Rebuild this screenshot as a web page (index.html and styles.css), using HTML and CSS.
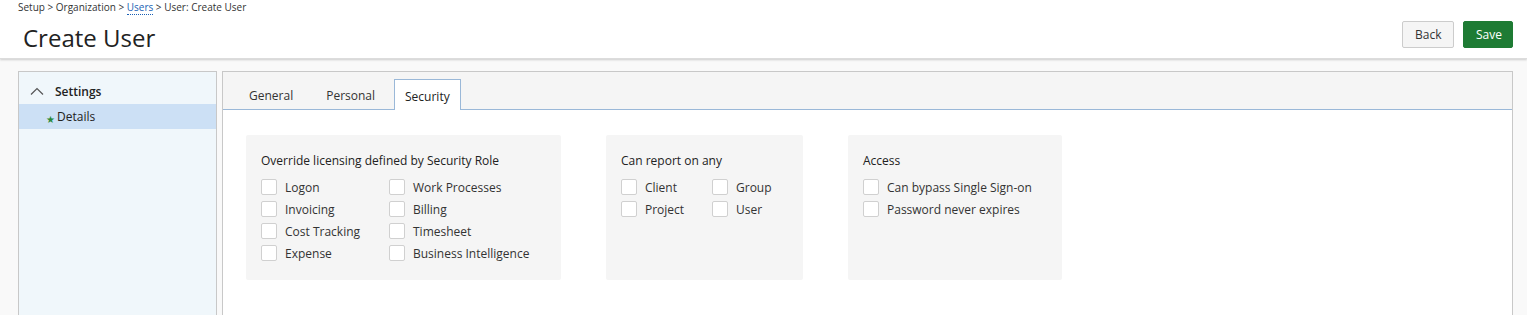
FILE: index.html
```html
<!DOCTYPE html>
<html lang="en">
<head>
<meta charset="UTF-8" />
<title>Create User</title>
<link rel="stylesheet" href="styles.css">
</head>
<body>
  <div class="page-header">
    <div class="header-left">
      <div class="breadcrumb">Setup &gt; Organization &gt; <a class="crumb-link">Users</a> &gt; User: Create User</div>
      <h1 class="page-title">Create User</h1>
    </div>
    <div class="header-actions">
      <button class="btn btn-back">Back</button>
      <button class="btn btn-save">Save</button>
    </div>
  </div>

  <div class="layout">
    <div class="sidebar">
      <div class="side-head">
        <svg class="chevron" width="14" height="8" viewBox="0 0 14 8"><path d="M1 7.5 L7 1.5 L13 7.5" fill="none" stroke="#555" stroke-width="1.2"/></svg>
        <span>Settings</span>
      </div>
      <div class="side-item active"><span class="star">&#9733;</span>Details</div>
    </div>

    <div class="main-panel">
      <div class="tabs">
        <div class="tab">General</div>
        <div class="tab">Personal</div>
        <div class="tab tab-active">Security</div>
      </div>
      <div class="tab-body">
        <div class="group group-lic">
          <div class="group-title">Override licensing defined by Security Role</div>
          <div class="check-grid cols-lic">
            <label class="check"><span class="box"></span>Logon</label>
            <label class="check"><span class="box"></span>Work Processes</label>
            <label class="check"><span class="box"></span>Invoicing</label>
            <label class="check"><span class="box"></span>Billing</label>
            <label class="check"><span class="box"></span>Cost Tracking</label>
            <label class="check"><span class="box"></span>Timesheet</label>
            <label class="check"><span class="box"></span>Expense</label>
            <label class="check"><span class="box"></span>Business Intelligence</label>
          </div>
        </div>
        <div class="group group-report">
          <div class="group-title">Can report on any</div>
          <div class="check-grid cols-report">
            <label class="check"><span class="box"></span>Client</label>
            <label class="check"><span class="box"></span>Group</label>
            <label class="check"><span class="box"></span>Project</label>
            <label class="check"><span class="box"></span>User</label>
          </div>
        </div>
        <div class="group group-access">
          <div class="group-title">Access</div>
          <div class="check-grid">
            <label class="check"><span class="box"></span>Can bypass Single Sign-on</label>
            <label class="check"><span class="box"></span>Password never expires</label>
          </div>
        </div>
      </div>
    </div>
  </div>
</body>
</html>
```

FILE: styles.css
```css
* { box-sizing: border-box; }
body {
  margin: 0;
  background: #f9f9f9;
  font-family: "Open Sans", Arial, sans-serif;
  color: #222;
  height: 315px;
  overflow: hidden;
}
.page-header {
  background: #fff;
  height: 59px;
  display: flex;
  justify-content: space-between;
  align-items: flex-start;
  box-shadow: 0 1px 2px rgba(0,0,0,0.18);
  border-bottom: 1px solid #dcdcdc;
}
.header-left { padding-left: 18px; }
.breadcrumb {
  font-size: 10px;
  line-height: 14px;
  color: #333;
}
.crumb-link {
  color: #1a5fb4;
  border-bottom: 1px dotted #1a5fb4;
}
.page-title {
  margin: 9px 0 0 5px;
  font-size: 24px;
  font-weight: 400;
  line-height: 30px;
  color: #222;
}
.header-actions {
  display: flex;
  gap: 9px;
  padding: 21px 14px 0 0;
}
.btn {
  height: 27px;
  font-family: "Open Sans", Arial, sans-serif;
  font-size: 12px;
  border-radius: 2px;
  padding: 0 12px;
  cursor: pointer;
}
.btn-back {
  width: 52px;
  background: #f5f5f5;
  border: 1px solid #ccc;
  color: #333;
}
.btn-save {
  width: 50px;
  background: #1e7b34;
  border: 1px solid #1e7b34;
  color: #fff;
}
.layout {
  display: flex;
  gap: 5px;
  height: 256px;
  padding: 12px 14px 0 18px;
}
.sidebar {
  width: 199px;
  background: #f0f7fb;
  border: 1px solid #c8c8c8;
  border-bottom: none;
  padding-top: 8px;
}
.side-head {
  display: flex;
  align-items: center;
  height: 22px;
  margin-bottom: 2px;
  font-size: 12px;
  font-weight: 600;
  color: #222;
  padding-left: 11px;
}
.chevron { margin-right: 11px; }
.side-item {
  height: 25px;
  line-height: 25px;
  font-size: 12px;
  padding-left: 27px;
  color: #222;
}
.side-item.active { background: #cce0f5; }
.star {
  color: #2a8a3a;
  font-size: 10px;
  margin-right: 2px;
  vertical-align: -2px;
}
.main-panel {
  flex: 1;
  border: 1px solid #c8c8c8;
  border-bottom: none;
  background: #fff;
}
.tabs {
  display: flex;
  align-items: flex-end;
  height: 38px;
  background: #f5f5f5;
  border-bottom: 1px solid #9ab8d8;
  padding-left: 12px;
}
.tab {
  height: 31px;
  padding: 3px 13px 0;
  line-height: 28px;
  font-size: 12px;
  color: #333;
  margin-right: 5px;
  border: 1px solid transparent;
  border-bottom: none;
}
.tab-active {
  background: #fff;
  border-color: #9ab8d8;
  margin-bottom: -1px;
  height: 31px;
  padding: 3px 10px 0;
  color: #222;
}
.tab-body {
  display: flex;
  align-items: flex-start;
  gap: 45px;
  padding: 25px 23px;
}
.group {
  background: #f5f5f5;
  border-radius: 2px;
  height: 145px;
  padding: 17px 15px 0 15px;
}
.group-lic { width: 315px; }
.group-report { width: 197px; }
.group-access { width: 214px; }
.group-title {
  font-size: 12px;
  line-height: 18px;
  color: #222;
  margin-bottom: 6px;
}
.check-grid {
  display: grid;
  grid-auto-rows: 22px;
}
.cols-lic { grid-template-columns: 128px auto; }
.cols-report { grid-template-columns: 91px auto; }
.check {
  display: flex;
  align-items: center;
  font-size: 12px;
  color: #333;
  white-space: nowrap;
}
.box {
  width: 16px;
  height: 16px;
  background: #fff;
  border: 1px solid #d0d0d0;
  border-radius: 2px;
  margin-right: 8px;
}
```
